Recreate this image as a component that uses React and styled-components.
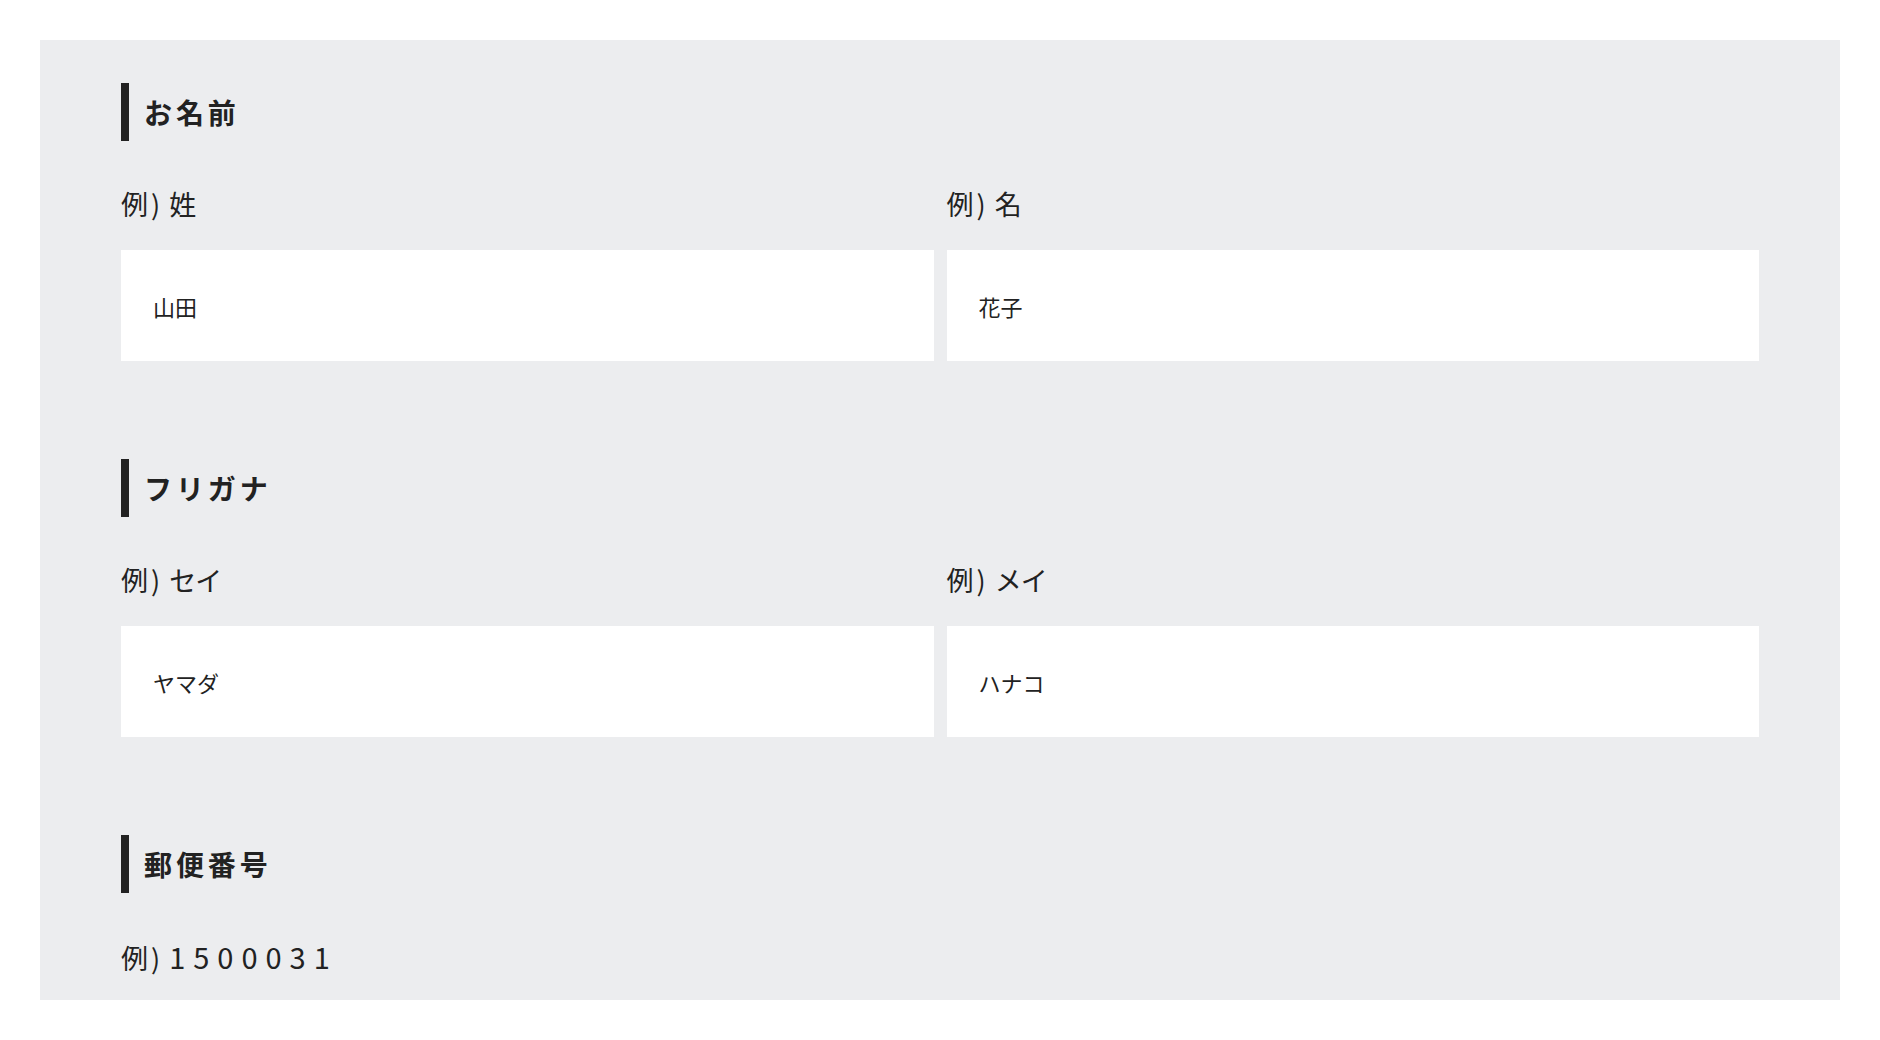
import React from 'react';
import styled, { createGlobalStyle } from 'styled-components';

const GlobalStyle = createGlobalStyle`
  html, body {
    margin: 0;
    padding: 0;
    background: #ffffff;
  }
  body {
    font-family: "Noto Sans CJK JP", "Noto Sans", sans-serif;
    color: #222222;
  }
`;

const Page = styled.div`
  padding: 40px;
`;

const Panel = styled.form`
  height: 960px;
  box-sizing: border-box;
  overflow: hidden;
  background: #ecedef;
  padding: 43px 81px 0;
`;

const Section = styled.section`
  margin-bottom: 98px;
`;

const Heading = styled.h2`
  display: flex;
  align-items: center;
  height: 58px;
  margin: 0;
  padding-left: 15px;
  border-left: 8px solid #222222;
  font-size: 28px;
  font-weight: 700;
  letter-spacing: 0.14em;
  color: #222222;
`;

const Fields = styled.div`
  display: grid;
  grid-template-columns: ${({ cols }) => `repeat(${cols}, 1fr)`};
  column-gap: 13px;
  margin-top: 42px;
`;

const Field = styled.label`
  display: flex;
  flex-direction: column;
`;

const Label = styled.span`
  font-size: 27px;
  line-height: 42px;
  letter-spacing: -1px;
  margin-bottom: 25px;
`;

const Paren = styled.span`
  margin: 0 10px 0 4px;
`;

const LabelText = styled.span`
  font-size: ${({ numeric }) => (numeric ? '29px' : 'inherit')};
  letter-spacing: ${({ numeric }) => (numeric ? '8px' : '-1px')};
`;

const Input = styled.input`
  height: 111px;
  box-sizing: border-box;
  border: none;
  outline: none;
  background: #ffffff;
  padding: 0 32px;
  font-family: "Noto Sans CJK JP", sans-serif;
  font-size: 22px;
  color: #222222;
  &::placeholder {
    color: #222222;
  }
`;

const sections = [
  {
    title: 'お名前',
    fields: [
      { example: '姓', placeholder: '山田' },
      { example: '名', placeholder: '花子' },
    ],
  },
  {
    title: 'フリガナ',
    fields: [
      { example: 'セイ', placeholder: 'ヤマダ' },
      { example: 'メイ', placeholder: 'ハナコ' },
    ],
  },
  {
    title: '郵便番号',
    single: true,
    fields: [{ example: '1500031', placeholder: '', numeric: true }],
  },
];

export default function App() {
  return (
    <>
      <GlobalStyle />
      <Page>
        <Panel onSubmit={(e) => e.preventDefault()}>
          {sections.map(({ title, fields, single }) => (
            <Section key={title}>
              <Heading>{title}</Heading>
              <Fields cols={single ? 1 : 2}>
                {fields.map(({ example, placeholder, numeric }) => (
                  <Field key={example}>
                    <Label>
                      例<Paren>)</Paren>
                      <LabelText numeric={numeric}>{example}</LabelText>
                    </Label>
                    <Input placeholder={placeholder} />
                  </Field>
                ))}
              </Fields>
            </Section>
          ))}
        </Panel>
      </Page>
    </>
  );
}
